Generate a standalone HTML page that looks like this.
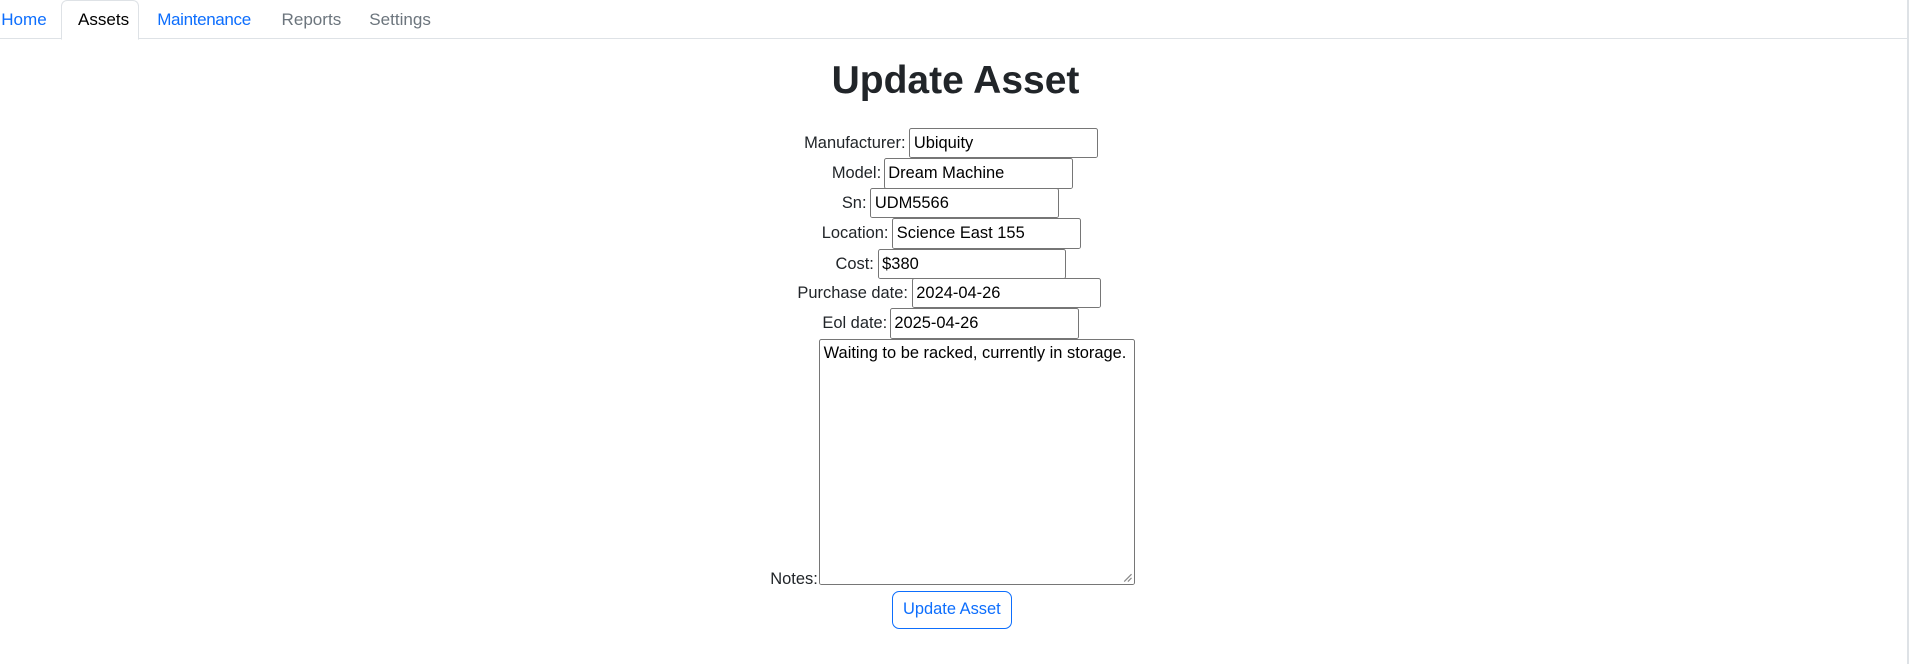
<!DOCTYPE html>
<html><head><meta charset="utf-8"><style>
html,body{margin:0;padding:0;background:#fff;}
body{zoom:1.21875;width:1568px;height:545px;overflow:hidden;font-family:"Liberation Sans",sans-serif;font-size:14px;color:#212529;position:relative;}
.nav{height:32px;border-bottom:1px solid #dee2e6;position:relative;width:1565px;box-sizing:border-box;}
.nav a{position:absolute;top:0;height:32px;line-height:32px;text-decoration:none;font-size:14px;}
.rline{position:absolute;left:1565px;top:0;width:1px;height:545px;background:#dee2e6;}
h1{margin:0;position:absolute;top:47px;width:1568px;text-align:center;font-size:32px;font-weight:bold;line-height:40px;}
.row{position:absolute;left:0;width:1568px;height:25px;}
.row label{position:absolute;top:4px;text-align:right;font-size:13.5px;line-height:17px;}
.row .inp{position:absolute;top:0;width:155px;height:25px;box-sizing:border-box;border:1px solid #767676;border-radius:2px;font-size:13.5px;line-height:23px;padding-left:3px;color:#000;}
</style></head><body>
<div class="nav">
<a style="left:1px;color:#0d6efd">Home</a>
<div style="position:absolute;left:50px;top:0;width:64px;height:33px;box-sizing:border-box;border:1px solid #dee2e6;border-bottom:1px solid #fff;border-radius:5px 5px 0 0;background:#fff"></div>
<a style="left:64px;color:#000">Assets</a>
<a style="left:129px;color:#0d6efd;letter-spacing:-0.3px">Maintenance</a>
<a style="left:231px;color:#6c757d">Reports</a>
<a style="left:303px;color:#6c757d">Settings</a>
</div>
<div class="rline"></div>
<h1>Update Asset</h1>

<div class="row" style="top:105px"><label style="right:825px">Manufacturer:</label><div class="inp" style="left:746px">Ubiquity</div></div>
<div class="row" style="top:130px"><label style="right:845px">Model:</label><div class="inp" style="left:725px">Dream Machine</div></div>
<div class="row" style="top:154px"><label style="right:857px">Sn:</label><div class="inp" style="left:714px">UDM5566</div></div>
<div class="row" style="top:179px"><label style="right:839px">Location:</label><div class="inp" style="left:732px">Science East 155</div></div>
<div class="row" style="top:204px"><label style="right:851px">Cost:</label><div class="inp" style="left:720px">$380</div></div>
<div class="row" style="top:228px"><label style="right:823px">Purchase date:</label><div class="inp" style="left:748px">2024-04-26</div></div>
<div class="row" style="top:253px"><label style="right:840px">Eol date:</label><div class="inp" style="left:730px">2025-04-26</div></div>

<div style="position:absolute;left:632px;top:467px;font-size:13.5px;line-height:17px">Notes:</div>
<div style="position:absolute;left:672px;top:278px;width:259px;height:202px;box-sizing:border-box;border:1px solid #767676;border-radius:2px;font-size:13.5px;padding:3px;color:#000;white-space:nowrap;line-height:17px">Waiting to be racked, currently in storage.
<svg style="position:absolute;right:1px;bottom:1px" width="8" height="8"><path d="M1 7L7 1M4 7L7 4" stroke="#888" stroke-width="1"/></svg></div>

<div style="position:absolute;left:732px;top:485px;width:98px;height:31px;box-sizing:border-box;border:1px solid #0d6efd;border-radius:6px;color:#0d6efd;text-align:center;line-height:29px;font-size:13.5px">Update Asset</div>
</body></html>
